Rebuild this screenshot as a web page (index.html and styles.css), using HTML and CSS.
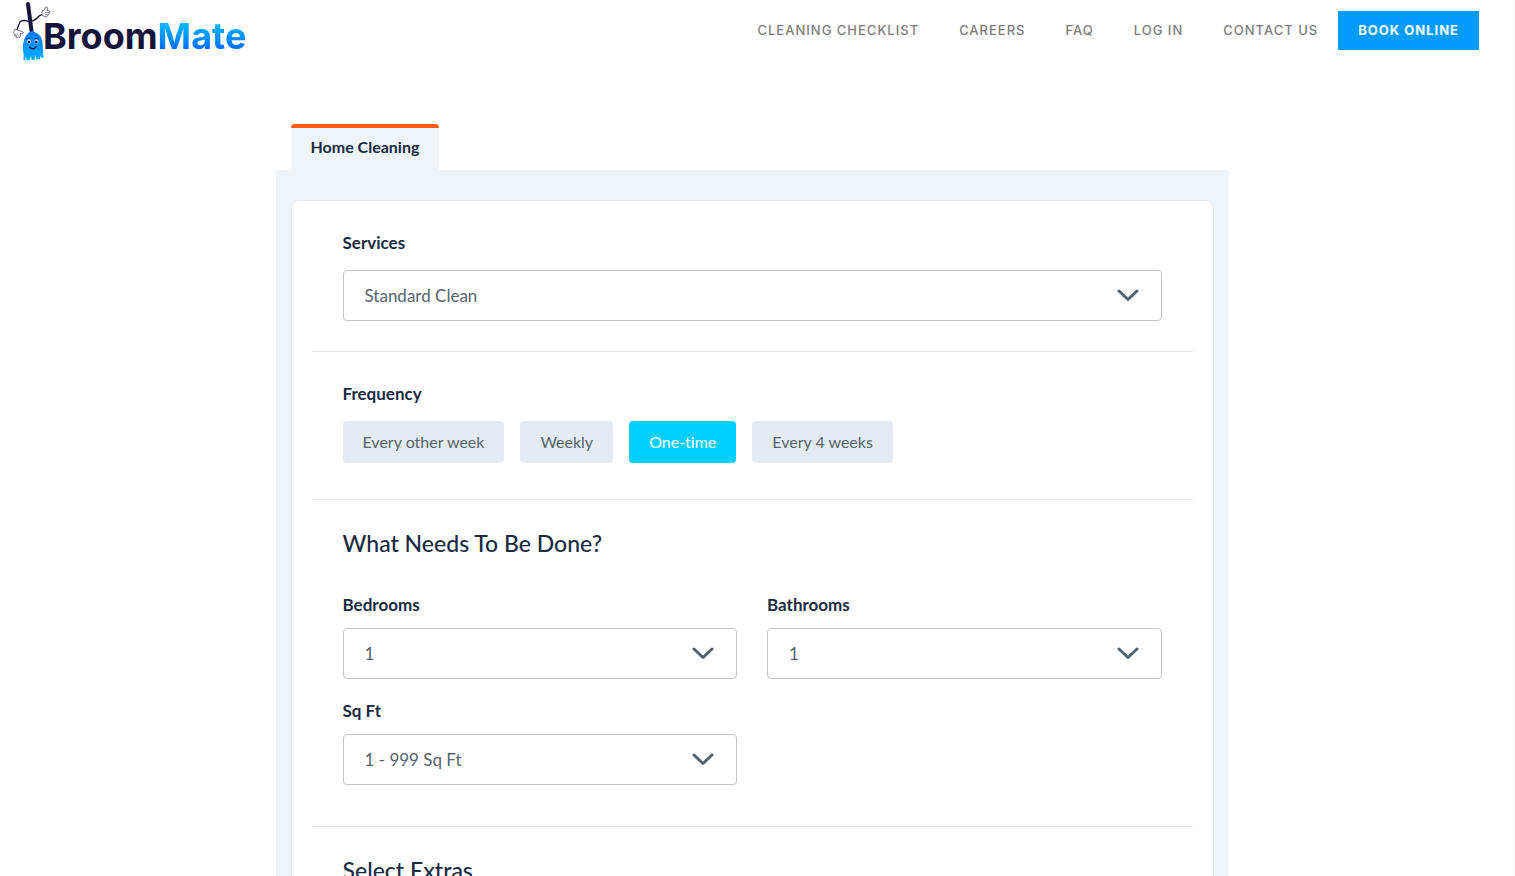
FILE: index.html
```html
<!DOCTYPE html>
<html lang="en">
<head>
<meta charset="utf-8">
<meta name="viewport" content="width=device-width, initial-scale=1">
<title>BroomMate - Book Online</title>
<link rel="stylesheet" href="styles.css">
</head>
<body>
<header class="header">
  <a class="logo" href="#" aria-label="BroomMate">
    <svg class="logo-broom" width="38" height="62" viewBox="0 0 38 62" fill="none" aria-hidden="true">
      <defs>
        <linearGradient id="bristles" x1="0" y1="62" x2="0" y2="31" gradientUnits="userSpaceOnUse">
          <stop offset="0" stop-color="#00b4ff"/>
          <stop offset="1" stop-color="#0878ff"/>
        </linearGradient>
      </defs>
      <path d="M15 4 18.500 31" stroke="#15133a" stroke-width="4" stroke-linecap="round"/>
      <path d="M17 22Q23 20 26 16L30 14M17 22Q10 19 7 22Q5 26 4 30" stroke="#15133a" stroke-width="1.300" stroke-linecap="round"/>
      <path d="M29 11 31 10 33 7Q34.500 6.500 34.500 9L34 10.500 36.500 11Q37 12 36 13Q36.500 14.500 35 15Q34.500 17 32 17L29 15Z" fill="#fff" stroke="#55556b" stroke-width=".8"/>
      <path d="M32 12.500H36M32 14.500H35" stroke="#55556b" stroke-width=".6"/>
      <path d="M2 29 6 30.500 10 32Q11 33.500 9 34L7 33.500 7.500 36Q7 38 5.500 37L4.500 38Q3 38 3 36Q1 36 1.500 34Q0 33 1 31.500Z" fill="#fff" stroke="#55556b" stroke-width=".8"/>
      <path d="M4 33 5.500 36M2.500 34 4 36.500" stroke="#55556b" stroke-width=".6"/>
      <path d="M16.500 32Q19 30.500 21.500 32Q28 34 29.500 42Q30 50 30.500 58L28 57.500 27.500 55 27 59 23 59.500 22.500 55 21.500 60 18.500 60 18 56 16.500 60.500 13.500 60 13 56.500 12 60.500H10.500Q11 53 10 51Q9 37 16.500 32Z" fill="url(#bristles)"/>
      <ellipse cx="16" cy="41.500" rx="2" ry="2.300" fill="#bfe1ff"/>
      <ellipse cx="23.500" cy="41.500" rx="2" ry="2.300" fill="#bfe1ff"/>
      <circle cx="16" cy="42" r="1.300" fill="#15133a"/>
      <circle cx="23.300" cy="42" r="1.300" fill="#15133a"/>
      <path d="M13.500 39Q15 37.800 16.500 38.500M22 38.500Q24 37.500 25.500 39" stroke="#15133a" stroke-width=".8" stroke-linecap="round"/>
      <path d="M16.500 47Q20 51 23.500 46.500" stroke="#15133a" stroke-width="1.200" stroke-linecap="round"/>
    </svg>
    <span class="logo-text">Broom<span class="logo-accent">Mate</span></span>
  </a>
  <nav class="nav" aria-label="Main">
    <a class="nav-link" href="#">CLEANING CHECKLIST</a>
    <a class="nav-link" href="#">CAREERS</a>
    <a class="nav-link" href="#">FAQ</a>
    <a class="nav-link" href="#">LOG IN</a>
    <a class="nav-link" href="#">CONTACT US</a>
    <a class="nav-link nav-book" href="#">BOOK ONLINE</a>
  </nav>
</header>

<main class="page">
  <div class="booking">
    <div class="tabs" role="tablist">
      <button class="tab" type="button" role="tab" aria-selected="true">Home Cleaning</button>
    </div>
    <div class="panel">
      <form class="card">
        <section class="section">
          <label class="label label-wide" for="services">Services</label>
          <div class="select">
            <select id="services"><option>Standard Clean</option></select>
            <svg class="chevron" width="22" height="13" viewBox="0 0 22 13" aria-hidden="true"><path d="M2 2 11 10.500 20 2"/></svg>
          </div>
        </section>

        <fieldset class="section section-frequency">
          <legend class="label label-wide">Frequency</legend>
          <div class="options">
            <label class="option"><input type="radio" name="frequency"><span>Every other week</span></label>
            <label class="option"><input type="radio" name="frequency"><span>Weekly</span></label>
            <label class="option"><input type="radio" name="frequency" checked><span>One-time</span></label>
            <label class="option"><input type="radio" name="frequency"><span>Every 4 weeks</span></label>
          </div>
        </fieldset>

        <section class="section section-rooms">
          <h2 class="title">What Needs To Be Done?</h2>
          <div class="fields">
            <div>
              <label class="label" for="bedrooms">Bedrooms</label>
              <div class="select">
                <select id="bedrooms"><option>1</option></select>
                <svg class="chevron" width="22" height="13" viewBox="0 0 22 13" aria-hidden="true"><path d="M2 2 11 10.500 20 2"/></svg>
              </div>
            </div>
            <div>
              <label class="label" for="bathrooms">Bathrooms</label>
              <div class="select">
                <select id="bathrooms"><option>1</option></select>
                <svg class="chevron" width="22" height="13" viewBox="0 0 22 13" aria-hidden="true"><path d="M2 2 11 10.500 20 2"/></svg>
              </div>
            </div>
            <div>
              <label class="label" for="sqft">Sq Ft</label>
              <div class="select">
                <select id="sqft"><option>1 - 999 Sq Ft</option></select>
                <svg class="chevron" width="22" height="13" viewBox="0 0 22 13" aria-hidden="true"><path d="M2 2 11 10.500 20 2"/></svg>
              </div>
            </div>
          </div>
        </section>

        <section class="section section-extras">
          <h2 class="title">Select Extras</h2>
        </section>
      </form>
    </div>
  </div>
</main>
</body>
</html>
```
FILE: styles.css
```css
*, *::before, *::after { box-sizing: border-box; }

body {
  margin: 0;
  height: 100vh;
  overflow: hidden;
  border-right: 1px solid #f4f4f4;
  background: #fff;
  color: #172b43;
  font: 17px/24px Lato, "Liberation Sans", sans-serif;
  font-variant-ligatures: no-common-ligatures;
}

.header {
  display: flex;
  justify-content: space-between;
  align-items: flex-start;
  padding: 0 35px 0 13px;
}

.logo {
  display: flex;
  align-items: flex-start;
  color: #15133a;
  text-decoration: none;
}
.logo-broom { flex: none; }
.logo-text {
  margin: 12px 0 0 -8px;
  font: 700 36px/48px Inter, sans-serif;
}
.logo-accent {
  background: linear-gradient(#00b9ff 20%, #006fff 80%);
  background-clip: text;
  -webkit-background-clip: text;
  color: transparent;
}

.nav { display: flex; padding-top: 11px; }
.nav-link {
  padding: 0 20px;
  color: #7d7d7d;
  font: 500 13px/39px Inter, sans-serif;
  letter-spacing: 1px;
  text-decoration: none;
  white-space: nowrap;
}
.nav-book { background: #009bff; color: #fff; font-weight: 700; }

.page { padding: 62px 10px 0 0; }
.booking {
  max-width: 953px;
  margin: 0 auto;
}

.tabs { display: flex; padding: 0 15px; }
.tab {
  padding: 7px 20px 11px;
  border: 0;
  border-top: 4px solid #ff5a13;
  border-radius: 4px 4px 0 0;
  background: #eff4f9;
  color: #172b43;
  font: 700 16px/24px Lato, sans-serif;
}

.panel { padding: 30px 15px; background: #eff4f9; }
.card {
  padding: 0 20px;
  border: 1px solid #e1e6ea;
  border-radius: 8px;
  background: #fff;
}

.section {
  margin: 0;
  padding: 30px 31px;
  border: 0;
  border-bottom: 1px solid #e5e7e9;
}
.section-frequency { padding-bottom: 36px; }
.section-rooms { padding: 28px 31px 41px; }
.section-extras { padding-top: 28px; border-bottom: 0; }

.label {
  display: block;
  margin-bottom: 11px;
  padding: 0;
  font-weight: 700;
}
.label-wide { margin-bottom: 15px; }
.section-frequency .label { float: left; width: 100%; }

.title {
  margin: 0 0 35px;
  font-size: 23px;
  font-weight: 500;
  line-height: 30px;
}

.select { display: grid; align-items: center; }
.select select {
  grid-area: 1 / 1;
  width: 100%;
  height: 51px;
  padding: 1px 60px 0 21px;
  border: 1px solid #bfc6ca;
  border-radius: 4px;
  background: #fff;
  color: #56646f;
  font: 17px/24px Lato, sans-serif;
  appearance: none;
}
.chevron {
  grid-area: 1 / 1;
  justify-self: end;
  margin-right: 23px;
  fill: none;
  stroke: #536270;
  stroke-width: 3;
  stroke-linecap: round;
  stroke-linejoin: round;
  pointer-events: none;
}

.options { display: flex; flex-wrap: wrap; gap: 16px; clear: both; }
.option { position: relative; }
.option input {
  position: absolute;
  inset: 0;
  margin: 0;
  opacity: 0;
}
.option span {
  display: block;
  padding: 9px 20px;
  border-radius: 4px;
  background: #e5ebf2;
  color: #56646f;
  font-size: 16px;
}
.option input:checked + span { background: #00cfff; color: #fff; }
.option input:focus-visible + span { outline: 2px solid #009bff; }

.fields {
  display: grid;
  grid-template-columns: 1fr 1fr;
  gap: 20px 30px;
}
```
